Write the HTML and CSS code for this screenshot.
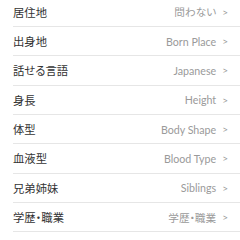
FILE: index.html
```html
<!DOCTYPE html>
<html lang="ja">
<head>
<meta charset="utf-8">
<link rel="stylesheet" href="styles.css">
</head>
<body>
<ul class="list">
  <li class="row"><span class="label">居住地</span><span class="value">問わない<span class="chev">&gt;</span></span></li>
  <li class="row"><span class="label">出身地</span><span class="value">Born Place<span class="chev">&gt;</span></span></li>
  <li class="row"><span class="label">話せる言語</span><span class="value">Japanese<span class="chev">&gt;</span></span></li>
  <li class="row"><span class="label">身長</span><span class="value">Height<span class="chev">&gt;</span></span></li>
  <li class="row"><span class="label">体型</span><span class="value">Body Shape<span class="chev">&gt;</span></span></li>
  <li class="row"><span class="label">血液型</span><span class="value">Blood Type<span class="chev">&gt;</span></span></li>
  <li class="row"><span class="label">兄弟姉妹</span><span class="value">Siblings<span class="chev">&gt;</span></span></li>
  <li class="row"><span class="label">学歴・職業</span><span class="value">学歴・職業<span class="chev">&gt;</span></span></li>
</ul>
</body>
</html>
```
FILE: styles.css
```css
html, body {
  margin: 0;
  padding: 0;
  background: #ffffff;
}
.list {
  list-style: none;
  margin: -2.33px 0 0 0;
  padding: 0 0 0 13px;
}
.row {
  display: flex;
  align-items: center;
  justify-content: space-between;
  height: 28.33px;
  border-bottom: 1px solid #e6e6e6;
  padding-right: 12px;
}
.label {
  font-family: "Noto Sans CJK JP", "Noto Sans", sans-serif;
  font-size: 11.33px;
  color: #333333;
  font-feature-settings: "palt";
}
.value {
  font-family: "Lato", "Noto Sans CJK JP", sans-serif;
  font-size: 10.67px;
  color: #9a9a9a;
  display: flex;
  align-items: center;
  font-feature-settings: "palt";
}
.chev {
  margin-left: 6px;
  font-size: 10px;
  color: #9a9a9a;
}
```
